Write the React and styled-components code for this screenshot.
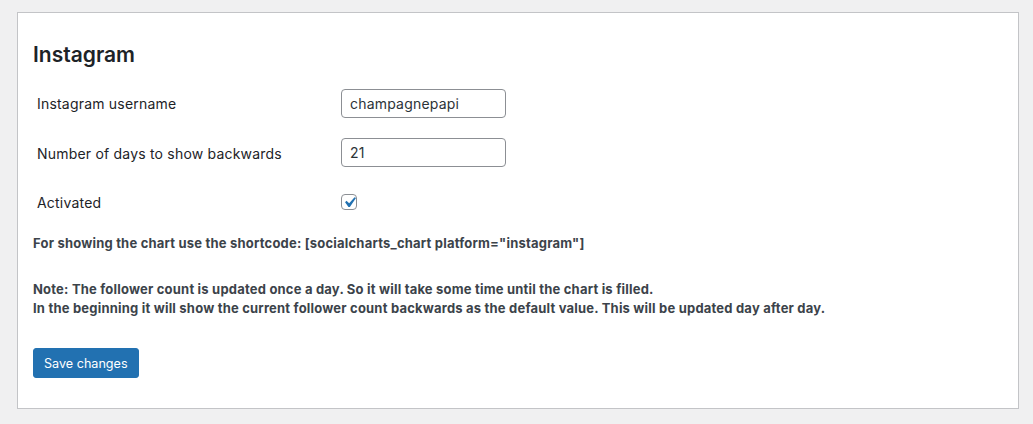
import React from "react";
import styled, { createGlobalStyle } from "styled-components";

const Global = createGlobalStyle`
  html, body {
    margin: 0;
    padding: 0;
    background: #f0f0f1;
    font-family: Inter, "Noto Sans", sans-serif;
    color: #3c434a;
  }
`;

const Page = styled.div`
  padding: 12px 14px 15px 17px;
`;

const Card = styled.div`
  background: #fff;
  border: 1px solid #c3c4c7;
  padding: 0 15px;
  height: 397px;
  box-sizing: border-box;
`;

const Title = styled.h2`
  margin: 0;
  padding-top: 29px;
  font-size: 21px;
  line-height: 26px;
  font-weight: 600;
  color: #1d2327;
`;

const Form = styled.div`
  display: grid;
  grid-template-columns: 308px 1fr;
  margin-top: 13px;
`;

const Label = styled.label`
  display: flex;
  align-items: center;
  height: ${(p) => p.$h}px;
  padding-left: 4px;
  font-size: 14px;
  letter-spacing: 0.2px;
  color: #1d2327;
`;

const Field = styled.div`
  display: flex;
  align-items: center;
  height: ${(p) => p.$h}px;
`;

const Input = styled.input`
  width: 165px;
  height: 29px;
  margin-top: ${(p) => p.$dy || 0}px;
  box-sizing: border-box;
  border: 1px solid #8c8f94;
  border-radius: 4px;
  padding: 0 8px;
  font-family: inherit;
  font-size: 14px;
  letter-spacing: 0.2px;
  color: #2c3338;
  outline: none;
`;

const Check = styled.span`
  width: 16px;
  height: 16px;
  box-sizing: border-box;
  border: 1px solid #8c8f94;
  border-radius: 4px;
  display: flex;
  align-items: center;
  justify-content: center;
  overflow: visible;

  svg {
    flex: none;
    margin: -3px -4px;
  }
`;

const Note = styled.p`
  margin: ${(p) => p.$mt}px 0 0;
  font-size: 13px;
  line-height: 19px;
  font-weight: 700;
  letter-spacing: 0.2px;
  color: #3c434a;
`;

const Button = styled.button`
  margin-top: 30px;
  height: 30px;
  padding: 0 10px;
  background: #2271b1;
  border: 1px solid #2271b1;
  border-radius: 3px;
  color: #fff;
  font-family: inherit;
  font-size: 12.6px;
  cursor: pointer;
`;

export default function App() {
  return (
    <Page>
      <Global />
      <Card>
        <Title>Instagram</Title>
        <Form>
          <Label $h={45}>Instagram username</Label>
          <Field $h={45}>
            <Input defaultValue="champagnepapi" />
          </Field>
          <Label $h={55}>Number of days to show backwards</Label>
          <Field $h={55}>
            <Input defaultValue="21" $dy={-3} />
          </Field>
          <Label $h={42}>Activated</Label>
          <Field $h={42}>
            <Check>
              <svg width="21" height="21" viewBox="0 0 20 20">
                <path d="M14.83 4.89l1.34.94-5.81 8.38H9.02L5.78 9.67l1.34-1.25 2.57 2.4z" fill="#2271b1" />
              </svg>
            </Check>
          </Field>
        </Form>
        <Note $mt={11}>
          For showing the chart use the shortcode: [socialcharts_chart platform="instagram"]
        </Note>
        <Note $mt={27}>
          Note: The follower count is updated once a day. So it will take some time until the chart is filled.
          <br />
          In the beginning it will show the current follower count backwards as the default value. This will be updated day after day.
        </Note>
        <Button>Save changes</Button>
      </Card>
    </Page>
  );
}
